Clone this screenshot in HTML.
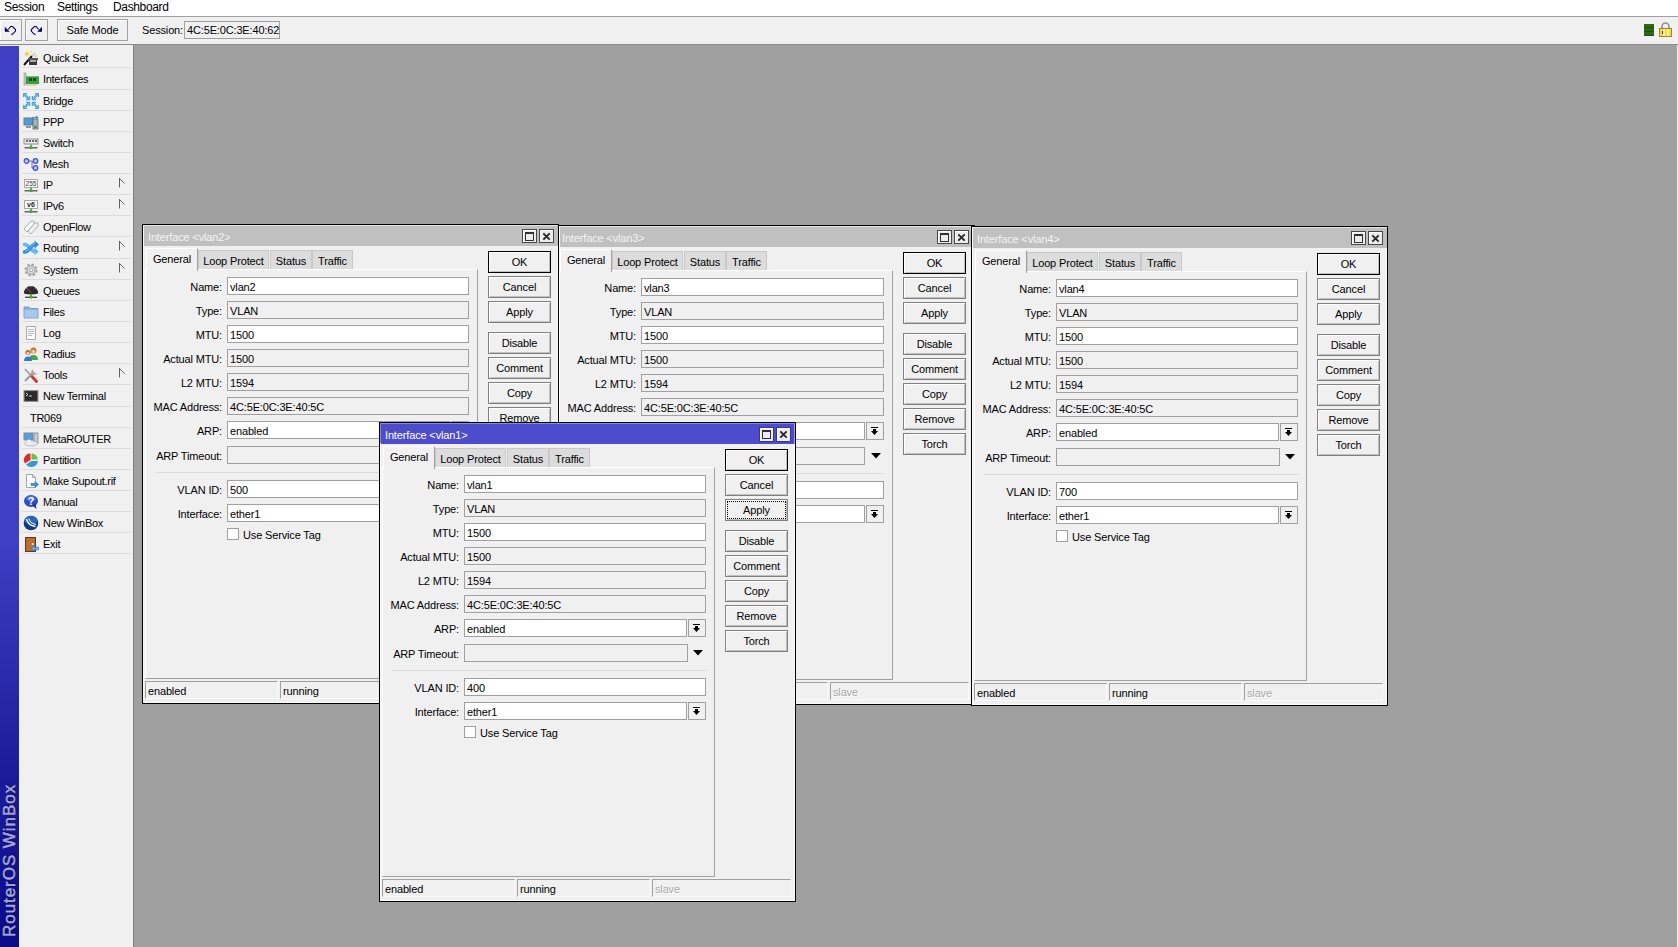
<!DOCTYPE html>
<html lang="en"><head><meta charset="utf-8"><title>WinBox</title>
<style>
html,body{margin:0;padding:0}
body{width:1678px;height:947px;position:relative;overflow:hidden;background:#a0a0a0;font-family:"Liberation Sans",sans-serif;font-size:11px;color:#000;letter-spacing:-0.15px;line-height:13px}
div,span{box-sizing:border-box}
.abs,.abs>*{position:absolute}
#menubar{position:absolute;left:0;top:0;width:1678px;height:16px;background:#fff;font-size:12px;letter-spacing:-0.35px}
#menubar span{position:absolute;top:0;line-height:14px;white-space:nowrap}
#mline{position:absolute;left:0;top:16px;width:1678px;height:1px;background:#a0a0a0}
#toolbar{position:absolute;left:0;top:17px;width:1678px;height:27px;background:#f0f0f0}
#tline{position:absolute;left:0;top:44px;width:1678px;height:1px;background:#8c8c8c}
.tbtn{position:absolute;top:19px;height:22px;border:1px solid #a0a0a0;background:#f0f0f0;box-shadow:inset 1px 1px 0 #fff}
#strip{position:absolute;left:0;top:45px;width:19px;height:902px;border-top:1px solid #f0f0fa;background:linear-gradient(#3f3fc3 0,#3f3fc3 55%,#1c1c9c 80%,#0a0a8a 100%)}
#vtext{position:absolute;left:0;top:0;transform-origin:0 0;transform:translate(1px,937px) rotate(-90deg);font-size:17px;line-height:18px;color:#a8a8d2;-webkit-text-stroke:0.45px #a8a8d2;white-space:nowrap;letter-spacing:0.95px;text-shadow:1px 1px 1px #0c0c50}
#side{position:absolute;left:19px;top:45px;width:114px;height:902px;background:#f0f0f0}
#sideb{position:absolute;left:133px;top:45px;width:1px;height:902px;background:#808080}
.mi{position:absolute;left:0;width:114px;height:21px}
.mi svg{position:absolute;left:4px;top:3px;width:16px;height:16px}
.mi .t{position:absolute;left:24px;top:5px;white-space:nowrap;letter-spacing:-0.3px}
.mi .sep{position:absolute;left:3px;width:109px;height:1px;background:#dcdcdc;bottom:0}
.mi .arr{position:absolute;left:100px;top:4px;width:7px;height:10px}
#redge{position:absolute;left:1677px;top:45px;width:1px;height:902px;background:#f0f0f0}

.win{position:absolute;width:417px;height:480px;background:#f0f0f0;border:1px solid #000;box-shadow:inset 0 0 0 1px #fafafa}
.win>*{position:absolute}
.win .tb{left:1px;top:1px;width:414px;height:20px;background:#c0c0c0;color:#f4f4f4;box-shadow:0 -1px 0 #e4e4e4}
.win.act .tb{background:#4c4ccc;color:#fff;box-shadow:-1px -1px 0 #8888e0,0 -1px 0 #8888e0;width:413px;border-right:0}
.win.act .tbr{left:414px;top:0;width:1px;height:21px;background:#a4a4e4}
.win .tb span{position:absolute;left:4px;top:5px;white-space:nowrap}
.win.act .tb span{top:5px}
.wb{width:15px;height:14px;background:#ececec;border:1px solid #484848;box-shadow:inset 1px 1px 0 #fff;top:4px}
.win.act .wb{height:15px;border-color:#3434a0}
.wb svg{position:absolute;left:0;top:0;width:13px;height:13px}
.tab{top:25px;height:20px;background:#dcdcdc;border:1px solid #c8c8c8;border-bottom:none;line-height:21px;text-align:center;white-space:nowrap}
.tab.on{top:23px;height:23px;background:#f0f0f0;border-color:#fff #a0a0a0 #f0f0f0 #fff;z-index:2;line-height:21px}
.pan{left:2px;top:44px;width:333px;height:410px;border:1px solid;border-color:#fff #a0a0a0 #a0a0a0 #fff}
.lb{width:79px;left:0;text-align:right;white-space:nowrap}
.in{left:84px;width:242px;height:18px;border:1px solid #a0a0a0;background:#fff;line-height:18px;padding-left:2px;white-space:nowrap}
.in.ro{background:#f0f0f0}
.in.dd{width:223px}
.ddb{left:308px;width:18px;height:18px;border:1px solid #a0a0a0;background:#f0f0f0}
.ddb svg{position:absolute;left:4px;top:4px;width:8px;height:9px}
.tri{left:313px;width:10px;height:6px}
.hr{left:12px;width:315px;height:1px;background:#dcdcdc}
.cb{left:84px;width:12px;height:12px;border:1px solid #a0a0a0;background:#fff}
.bt{left:345px;width:63px;height:22px;border:1px solid #808080;background:#f0f0f0;box-shadow:inset 1px 1px 0 #fff,inset -1px -1px 0 #c0c0c0;text-align:center;line-height:20px;white-space:nowrap}
.bt.def{border-color:#000}
.bt.foc:after{content:"";position:absolute;left:1px;top:1px;right:1px;bottom:1px;border:1px dotted #000}
.st{top:456px;height:18px;border:1px solid;border-color:#a0a0a0 #fafafa #fafafa #a0a0a0;line-height:18px;padding-left:2px;white-space:nowrap}
.st.dis{color:#a8a8a8;text-shadow:1px 1px 0 #fff}
.w3 .tab,.w3 .lb,.w3 .in,.w3 .pan,.w3 .tb span,.w3 .cb,.w3 .hr{margin-left:-2px}
.w3 .in{padding-right:1px;width:243px}
.w3 .pan{width:334px}
.w3 .st{margin-left:-1px}
.w3 .in.dd{width:224px}
.w3 .bt,.w3 .ddb,.w3 .tri,.w3 .wb{margin-left:-1px}
</style></head><body>
<div id="menubar"><span style="left:4px">Session</span><span style="left:57px">Settings</span><span style="left:113px">Dashboard</span></div>
<div id="mline"></div>
<div id="toolbar"></div><div id="tline"></div>
<div class="tbtn" style="left:-1px;width:23px"><svg width="21" height="20" viewBox="0 0 21 20" style="position:absolute;left:0;top:0"><path d="M8.200 9.500 L10.700 6.500 H12.500 L15.500 9.500 V11 L12.500 14.300 H11" fill="none" stroke="#00005c" stroke-width="1.100"/><path d="M4.800 6.800 V11.700 H9.700 Z" fill="#00006c"/></svg></div>
<div class="tbtn" style="left:25px;width:23px"><svg width="21" height="20" viewBox="0 0 21 20" style="position:absolute;left:0;top:0"><path d="M12.500 9.500 L10.300 6.500 H8.500 L5.300 9.500 V11 L8.300 14.300 H9.800" fill="none" stroke="#00005c" stroke-width="1.100"/><path d="M16 6.800 V11.700 H11.200 Z" fill="#00006c"/></svg></div>
<div class="tbtn" style="left:57px;width:71px;text-align:center;line-height:20px">Safe Mode</div>
<span style="position:absolute;left:142px;top:24px;white-space:nowrap">Session:</span>
<div style="position:absolute;left:184px;top:21px;width:96px;height:18px;border:1px solid #a0a0a0;background:#f0f0f0;line-height:17px;padding-left:2px;white-space:nowrap">4C:5E:0C:3E:40:62</div>
<div style="position:absolute;left:1644px;top:24px;width:10px;height:12px;background:repeating-linear-gradient(#2c6a12 0,#2c6a12 3px,#1e5208 3px,#1e5208 4px)"></div>
<svg style="position:absolute;left:1659px;top:22px" width="13" height="15" viewBox="0 0 13 15"><path d="M3 7 V4.5 A3.5 3.5 0 0 1 10 4.5 V7" fill="none" stroke="#909090" stroke-width="1.6"/><rect x="0.5" y="6.5" width="12" height="8" fill="#f4d84a" stroke="#a08820"/><rect x="4" y="7" width="2" height="7" fill="#fff3a0"/><rect x="8" y="7" width="2" height="7" fill="#fff3a0"/><rect x="3" y="9" width="1" height="3" fill="#504010"/></svg>
<div id="strip"></div><div id="vtext">RouterOS WinBox</div><div id="side">
<div class="mi" style="top:2px;height:21px"><svg viewBox="0 0 16 16"><path d="M1 15 L9 6" stroke="#111" stroke-width="2"/><path d="M9 6 L12 3" stroke="#ccc" stroke-width="2"/><rect x="6" y="9" width="8" height="6" fill="#3a3a3a"/><rect x="5" y="8" width="10" height="2" fill="#555"/><rect x="7" y="10" width="6" height="2" fill="#aaa"/><path d="M4 1 L5 3 L7 4 L5 5 L4 7 L3 5 L1 4 L3 3 Z" fill="#f0d020"/><circle cx="13" cy="6" r="1" fill="#f0d020"/><circle cx="8" cy="1.5" r=".8" fill="#f0d020"/></svg><span class="t">Quick Set</span><span class="sep"></span></div>
<div class="mi" style="top:23px;height:22px"><svg viewBox="0 0 16 16"><rect x="1" y="2" width="2" height="12" fill="#c8c8c8" stroke="#909090" stroke-width=".6"/><rect x="3" y="5" width="13" height="8" fill="#35a042"/><rect x="3" y="5" width="13" height="1" fill="#6cc070"/><rect x="6" y="7" width="3" height="3" fill="#1c4a20"/><rect x="10" y="7" width="3" height="3" fill="#1c4a20"/><path d="M5 13 V15 M7 13 V15 M9 13 V15 M11 13 V15 M13 13 V15" stroke="#d8c050" stroke-width="1"/></svg><span class="t">Interfaces</span><span class="sep"></span></div>
<div class="mi" style="top:45px;height:21px"><svg viewBox="0 0 16 16"><g fill="#5cbcf0" stroke="#1c80cc" stroke-width=".600" stroke-linejoin="round"><path d="M0 0 L3.600 0 L2.400 1.200 L5.300 4.100 L6.500 2.900 L6.500 6.500 L2.900 6.500 L4.100 5.300 L1.200 2.400 L0 3.600 Z" transform="translate(.3 .3)"/><path d="M0 0 L3.600 0 L2.400 1.200 L5.300 4.100 L6.500 2.900 L6.500 6.500 L2.900 6.500 L4.100 5.300 L1.200 2.400 L0 3.600 Z" transform="translate(15.700 .3) scale(-1 1)"/><path d="M0 0 L3.600 0 L2.400 1.200 L5.300 4.100 L6.500 2.900 L6.500 6.500 L2.900 6.500 L4.100 5.300 L1.200 2.400 L0 3.600 Z" transform="translate(.3 15.700) scale(1 -1)"/><path d="M0 0 L3.600 0 L2.400 1.200 L5.300 4.100 L6.500 2.900 L6.500 6.500 L2.900 6.500 L4.100 5.300 L1.200 2.400 L0 3.600 Z" transform="translate(15.700 15.700) scale(-1 -1)"/></g></svg><span class="t">Bridge</span><span class="sep"></span></div>
<div class="mi" style="top:66px;height:21px"><svg viewBox="0 0 16 16"><rect x="1" y="4" width="9" height="7" fill="#4a9be0" stroke="#707880"/><rect x="3" y="12" width="5" height="2" fill="#9098a0"/><rect x="10" y="5" width="5" height="10" fill="#a8b0b8" stroke="#606870" stroke-width=".8"/><rect x="11" y="12" width="3" height="2" fill="#40a040"/><path d="M9 3 H13 V1.5 L15.5 3.5 L13 5.5 V4 H9 Z" fill="#3090e8"/></svg><span class="t">PPP</span><span class="sep"></span></div>
<div class="mi" style="top:87px;height:21px"><svg viewBox="0 0 16 16"><rect x="1" y="4" width="14" height="5" fill="#e8e8e8" stroke="#909090"/><path d="M3 6 H5 M6 6 H8 M9 6 H11 M12 6 H14" stroke="#404040" stroke-width="1.400"/><path d="M8 9.500 V12" stroke="#30a030" stroke-width="1.400"/><path d="M1.500 12.800 H14.500" stroke="#505050" stroke-width="1.300"/><circle cx="8" cy="12.600" r="1.700" fill="#38b038"/></svg><span class="t">Switch</span><span class="sep"></span></div>
<div class="mi" style="top:108px;height:21px"><svg viewBox="0 0 16 16"><path d="M5 5 H9 V12 H11 M9 6 H11" stroke="#707890" fill="none"/><circle cx="3.5" cy="5" r="2.3" fill="#b8c0ff" stroke="#4050d0" stroke-width="1.2"/><circle cx="12.5" cy="5" r="2.3" fill="#b8c0ff" stroke="#4050d0" stroke-width="1.2"/><circle cx="12.5" cy="12" r="2.3" fill="#b8c0ff" stroke="#4050d0" stroke-width="1.2"/></svg><span class="t">Mesh</span><span class="sep"></span></div>
<div class="mi" style="top:129px;height:21px"><svg viewBox="0 0 16 16"><rect x="1.500" y="2.500" width="13" height="8" fill="#f8f8f8" stroke="#a8a8a8"/><text x="8" y="9" font-size="6.500" text-anchor="middle" font-family="Liberation Sans,sans-serif" fill="#404040" letter-spacing="0">255</text><path d="M8 10.500 V13" stroke="#30a030" stroke-width="1.400"/><path d="M1.500 13.800 H14.500" stroke="#505050" stroke-width="1.300"/><circle cx="8" cy="13.600" r="1.700" fill="#38b038"/></svg><span class="t">IP</span><svg class="arr" viewBox="0 0 7 10" style="left:100px;top:4px;width:7px;height:10px"><path d="M0.500 0 V9.500 M0.500 0.500 L5.500 5.500" stroke="#606060" stroke-width="1" fill="none"/></svg><span class="sep"></span></div>
<div class="mi" style="top:150px;height:21px"><svg viewBox="0 0 16 16"><rect x="1.500" y="2.500" width="13" height="8" fill="#f8f8f8" stroke="#a8a8a8"/><text x="8" y="9" font-size="7" font-weight="bold" text-anchor="middle" font-family="Liberation Sans,sans-serif" fill="#282828" letter-spacing="0">v6</text><path d="M8 10.500 V13" stroke="#30a030" stroke-width="1.400"/><path d="M1.500 13.800 H14.500" stroke="#505050" stroke-width="1.300"/><circle cx="8" cy="13.600" r="1.700" fill="#38b038"/></svg><span class="t">IPv6</span><svg class="arr" viewBox="0 0 7 10" style="left:100px;top:4px;width:7px;height:10px"><path d="M0.500 0 V9.500 M0.500 0.500 L5.500 5.500" stroke="#606060" stroke-width="1" fill="none"/></svg><span class="sep"></span></div>
<div class="mi" style="top:171px;height:21px"><svg viewBox="0 0 16 16"><path d="M1 10 L8 2 L11 2 L11 5 L4 13 Z" fill="#f8faf8" stroke="#a0a8a8" stroke-width=".9"/><path d="M5 12 L12 4 L15 4 L15 7 L8 15 Z" fill="#eef4f2" stroke="#a0a8a8" stroke-width=".9"/></svg><span class="t">OpenFlow</span><span class="sep"></span></div>
<div class="mi" style="top:192px;height:22px"><svg viewBox="0 0 16 16"><path d="M1.500 4.500 C6.500 4.500 7.500 11.500 12 11.500" fill="none" stroke="#62b8f4" stroke-width="3.400" stroke-linecap="round"/><path d="M11.500 7.800 L15.800 11.500 L11.500 15.200 Z" fill="#62b8f4"/><path d="M1.500 12 C6.500 12 7.500 4.500 12 4.500" fill="none" stroke="#2c8ce0" stroke-width="3.600" stroke-linecap="round"/><path d="M11.500 .5 L16 4.500 L11.500 8.500 Z" fill="#2c8ce0"/><path d="M2 11.300 C6.500 11 7.500 4 12 3.800" fill="none" stroke="#7cc8f8" stroke-width="1"/></svg><span class="t">Routing</span><svg class="arr" viewBox="0 0 7 10" style="left:100px;top:4px;width:7px;height:10px"><path d="M0.500 0 V9.500 M0.500 0.500 L5.500 5.500" stroke="#606060" stroke-width="1" fill="none"/></svg><span class="sep"></span></div>
<div class="mi" style="top:214px;height:21px"><svg viewBox="0 0 16 16"><circle cx="8" cy="8" r="5" fill="none" stroke="#a0a0a0" stroke-width="3" stroke-dasharray="2.2 1.7"/><circle cx="8" cy="8" r="4" fill="none" stroke="#b8b8b8" stroke-width="2.2"/><circle cx="8" cy="8" r="1.8" fill="#f0f0f0" stroke="#909090" stroke-width=".8"/></svg><span class="t">System</span><svg class="arr" viewBox="0 0 7 10" style="left:100px;top:4px;width:7px;height:10px"><path d="M0.500 0 V9.500 M0.500 0.500 L5.500 5.500" stroke="#606060" stroke-width="1" fill="none"/></svg><span class="sep"></span></div>
<div class="mi" style="top:235px;height:21px"><svg viewBox="0 0 16 16"><path d="M.8 10.500 A7.200 7.500 0 0 1 15.200 10.500 Q8 12.500 .8 10.500 Z" fill="#2c2c2c"/><path d="M8 9.500 L4.500 5.500" stroke="#e04040" stroke-width="1"/><path d="M3 5 l1 1 M8 3 v1.300 M13 5 l-1 1" stroke="#aaa" stroke-width=".7"/><path d="M8 11.500 V13.500" stroke="#30a030" stroke-width="1.400"/><path d="M2 14.300 H14" stroke="#404040" stroke-width="1.300"/><circle cx="8" cy="14" r="1.700" fill="#38b038"/></svg><span class="t">Queues</span><span class="sep"></span></div>
<div class="mi" style="top:256px;height:21px"><svg viewBox="0 0 16 16"><path d="M1 3 H6 L7.5 4.5 H15 V14 H1 Z" fill="#8cb4e0" stroke="#6890c0" stroke-width=".8"/><rect x="1.5" y="6" width="13" height="7.6" fill="#a8c8ec"/></svg><span class="t">Files</span><span class="sep"></span></div>
<div class="mi" style="top:277px;height:21px"><svg viewBox="0 0 16 16"><path d="M3.5 1.5 H12.500 V14.5 H3.5 Z" fill="#fbfbfb" stroke="#a8a8a8"/><path d="M5 4.5 H11 M5 6.5 H11 M5 8.500 H11 M5 10.5 H9" stroke="#b0b8c0" stroke-width="1"/></svg><span class="t">Log</span><span class="sep"></span></div>
<div class="mi" style="top:298px;height:21px"><svg viewBox="0 0 16 16"><circle cx="10.5" cy="4.5" r="3" fill="#c87830"/><circle cx="10.5" cy="5.5" r="1.8" fill="#f4c8a0"/><path d="M6 14 Q6 9 10.500 9 Q15 9 15 14 Z" fill="#40a850"/><circle cx="5" cy="6.5" r="2.6" fill="#b86828"/><circle cx="5" cy="7.300" r="1.600" fill="#f4c8a0"/><path d="M1 15 Q1 10.500 5 10.500 Q9 10.500 9 15 Z" fill="#3c78d0"/></svg><span class="t">Radius</span><span class="sep"></span></div>
<div class="mi" style="top:319px;height:21px"><svg viewBox="0 0 16 16"><path d="M2 2 L13 14" stroke="#a0a0a0" stroke-width="1.8"/><path d="M8.5 9 L13.5 14.5" stroke="#e03030" stroke-width="2.8" stroke-linecap="round"/><path d="M2 14 L11 5" stroke="#989898" stroke-width="2"/><path d="M10 2.500 A3 3 0 1 0 14 6 L12 6.500 L10.500 5 Z" fill="#a8a8a8"/></svg><span class="t">Tools</span><svg class="arr" viewBox="0 0 7 10" style="left:100px;top:4px;width:7px;height:10px"><path d="M0.500 0 V9.500 M0.500 0.500 L5.500 5.500" stroke="#606060" stroke-width="1" fill="none"/></svg><span class="sep"></span></div>
<div class="mi" style="top:340px;height:22px"><svg viewBox="0 0 16 16"><rect x="1" y="2.5" width="14" height="11" fill="#404040" stroke="#909090"/><rect x="2" y="3.500" width="12" height="9" fill="#2a2a2a"/><path d="M3 5 L5 6.500 L3 8 M6 8 H9" stroke="#e0e0e0" stroke-width=".9" fill="none"/></svg><span class="t">New Terminal</span><span class="sep"></span></div>
<div class="mi" style="top:362px;height:21px"><span class="t" style="left:11px">TR069</span><span class="sep"></span></div>
<div class="mi" style="top:383px;height:21px"><svg viewBox="0 0 16 16"><rect x="1" y="2" width="9" height="7" fill="#50a0e4" stroke="#808890"/><rect x="11" y="2" width="4" height="10" fill="#c8ccd0" stroke="#808890" stroke-width=".8"/><ellipse cx="8" cy="12.500" rx="6.500" ry="2.600" fill="#e4eaf2" stroke="#a0a8b4" stroke-width=".7"/><circle cx="6" cy="11" r="2.400" fill="#e8eef6"/></svg><span class="t">MetaROUTER</span><span class="sep"></span></div>
<div class="mi" style="top:404px;height:21px"><svg viewBox="0 0 16 16"><path d="M7.500 8 V1.500 A6.500 6.500 0 0 0 2 11.500 Z" fill="#e02828"/><path d="M8.500 7.500 V1.500 A6.500 6.500 0 0 1 14.800 7.500 Z" fill="#68c040"/><path d="M8.300 9 H15 A6.800 6.800 0 0 1 3 12.500 Z" fill="#3498d8"/></svg><span class="t">Partition</span><span class="sep"></span></div>
<div class="mi" style="top:425px;height:21px"><svg viewBox="0 0 16 16"><path d="M3.500 1.500 H9.500 L12.500 4.500 V14.500 H3.500 Z" fill="#fcfcfc" stroke="#a0a8b0"/><path d="M9.500 1.500 V4.500 H12.500" fill="none" stroke="#a0a8b0"/><path d="M8 10.500 H12 V8.500 L15.500 11.500 L12 14.500 V12.500 H8 Z" fill="#3890e0" stroke="#2060b0" stroke-width=".5"/></svg><span class="t">Make Supout.rif</span><span class="sep"></span></div>
<div class="mi" style="top:446px;height:21px"><svg viewBox="0 0 16 16"><ellipse cx="8" cy="7" rx="7" ry="6.100" fill="#2c4cc4"/><path d="M9.500 11.500 L13.500 15 L12.500 10 Z" fill="#1c2c90"/><ellipse cx="8" cy="4.500" rx="5" ry="2.800" fill="#6c8cf0" opacity=".55"/><text x="8" y="10.800" font-size="10.500" font-weight="bold" text-anchor="middle" font-family="Liberation Sans,sans-serif" fill="#fff" letter-spacing="0">?</text></svg><span class="t">Manual</span><span class="sep"></span></div>
<div class="mi" style="top:467px;height:21px"><svg viewBox="0 0 16 16"><circle cx="8" cy="8" r="7.300" fill="#0e3c84"/><path d="M1.200 6 A7.300 7.300 0 0 1 14.800 6 A9 6 0 0 0 1.200 6 Z" fill="#2c74c8"/><ellipse cx="8" cy="5.500" rx="6.500" ry="4" fill="#2468bc"/><path d="M3.500 4 Q5 10.500 12.500 11.500" fill="none" stroke="#fff" stroke-width="1.300"/><path d="M6 3.500 Q7 8.500 13 9.500" fill="none" stroke="#d8e8ff" stroke-width="1.100"/></svg><span class="t">New WinBox</span><span class="sep"></span></div>
<div class="mi" style="top:488px;height:21px"><svg viewBox="0 0 16 16"><rect x="2.500" y="1.500" width="10" height="14" fill="#b86a30" stroke="#6c3410"/><path d="M5 3 V14 M7.500 3 V14 M10 3 V14" stroke="#8c4818" stroke-width=".8"/><rect x="4" y="3" width="7" height="11" fill="#c87838" opacity=".6"/><circle cx="9.800" cy="8" r="1" fill="#fff"/><path d="M15.500 11.200 H11.500 V9.700 L8 12.500 L11.500 15.300 V13.800 H15.500 Z" fill="#58b0f0" stroke="#1c78c8" stroke-width=".6"/></svg><span class="t">Exit</span><span class="sep"></span></div>
</div><div id="sideb"></div><div id="redge"></div>
<div class="win" style="left:142px;top:224px"><div class="tb"><span>Interface &lt;vlan2&gt;</span></div><div class="wb" style="left:379px"><svg viewBox="0 0 13 13"><rect x="2.500" y="2.500" width="8" height="8" fill="none" stroke="#303030"/><rect x="2" y="2" width="9" height="2" fill="#303030"/></svg></div><div class="wb" style="left:396px"><svg viewBox="0 0 13 13"><path d="M3.300 3.300 L9.700 9.700 M9.700 3.300 L3.300 9.700" stroke="#282828" stroke-width="1.900"/></svg></div><div class="tab on" style="left:3px;width:52px">General</div><div class="tab" style="left:55px;width:71px">Loop Protect</div><div class="tab" style="left:127px;width:42px">Status</div><div class="tab" style="left:169px;width:41px">Traffic</div><div class="pan"></div><span class="lb" style="top:56px">Name:</span><div class="in " style="top:52px">vlan2</div><span class="lb" style="top:80px">Type:</span><div class="in ro" style="top:76px">VLAN</div><span class="lb" style="top:104px">MTU:</span><div class="in " style="top:100px">1500</div><span class="lb" style="top:128px">Actual MTU:</span><div class="in ro" style="top:124px">1500</div><span class="lb" style="top:152px">L2 MTU:</span><div class="in ro" style="top:148px">1594</div><span class="lb" style="top:176px">MAC Address:</span><div class="in ro" style="top:172px">4C:5E:0C:3E:40:5C</div><span class="lb" style="top:200px">ARP:</span><div class="in dd" style="top:196px">enabled</div><div class="ddb" style="top:196px"><svg viewBox="0 0 8 9"><rect x="0" y="0" width="7" height="1" fill="#000"/><path d="M2 2 H5 V4 H7 L3.500 8 L0 4 H2 Z" fill="#000"/></svg></div><span class="lb" style="top:225px">ARP Timeout:</span><div class="in ro" style="top:221px;width:224px"></div><svg class="tri" style="top:227px" viewBox="0 0 10 6"><path d="M0 0 H10 L5 5.500 Z" fill="#000"/></svg><div class="hr" style="top:247px"></div><span class="lb" style="top:259px">VLAN ID:</span><div class="in" style="top:255px">500</div><span class="lb" style="top:283px">Interface:</span><div class="in dd" style="top:279px">ether1</div><div class="ddb" style="top:279px"><svg viewBox="0 0 8 9"><rect x="0" y="0" width="7" height="1" fill="#000"/><path d="M2 2 H5 V4 H7 L3.500 8 L0 4 H2 Z" fill="#000"/></svg></div><div class="cb" style="top:303px"></div><span style="left:100px;top:304px;white-space:nowrap">Use Service Tag</span><div class="bt def" style="top:26px">OK</div><div class="bt " style="top:51px">Cancel</div><div class="bt " style="top:76px">Apply</div><div class="bt " style="top:107px">Disable</div><div class="bt " style="top:132px">Comment</div><div class="bt " style="top:157px">Copy</div><div class="bt " style="top:182px">Remove</div><div class="bt " style="top:207px">Torch</div><div class="st" style="left:2px;width:133px">enabled</div><div class="st" style="left:137px;width:133px">running</div><div class="st dis" style="left:272px;width:139px">slave</div></div>
<div class="win w3" style="left:558px;top:225px"><div class="tb"><span>Interface &lt;vlan3&gt;</span></div><div class="wb" style="left:379px"><svg viewBox="0 0 13 13"><rect x="2.500" y="2.500" width="8" height="8" fill="none" stroke="#303030"/><rect x="2" y="2" width="9" height="2" fill="#303030"/></svg></div><div class="wb" style="left:396px"><svg viewBox="0 0 13 13"><path d="M3.300 3.300 L9.700 9.700 M9.700 3.300 L3.300 9.700" stroke="#282828" stroke-width="1.900"/></svg></div><div class="tab on" style="left:3px;width:52px">General</div><div class="tab" style="left:55px;width:71px">Loop Protect</div><div class="tab" style="left:127px;width:42px">Status</div><div class="tab" style="left:169px;width:41px">Traffic</div><div class="pan"></div><span class="lb" style="top:56px">Name:</span><div class="in " style="top:52px">vlan3</div><span class="lb" style="top:80px">Type:</span><div class="in ro" style="top:76px">VLAN</div><span class="lb" style="top:104px">MTU:</span><div class="in " style="top:100px">1500</div><span class="lb" style="top:128px">Actual MTU:</span><div class="in ro" style="top:124px">1500</div><span class="lb" style="top:152px">L2 MTU:</span><div class="in ro" style="top:148px">1594</div><span class="lb" style="top:176px">MAC Address:</span><div class="in ro" style="top:172px">4C:5E:0C:3E:40:5C</div><span class="lb" style="top:200px">ARP:</span><div class="in dd" style="top:196px">enabled</div><div class="ddb" style="top:196px"><svg viewBox="0 0 8 9"><rect x="0" y="0" width="7" height="1" fill="#000"/><path d="M2 2 H5 V4 H7 L3.500 8 L0 4 H2 Z" fill="#000"/></svg></div><span class="lb" style="top:225px">ARP Timeout:</span><div class="in ro" style="top:221px;width:224px"></div><svg class="tri" style="top:227px" viewBox="0 0 10 6"><path d="M0 0 H10 L5 5.500 Z" fill="#000"/></svg><div class="hr" style="top:247px"></div><span class="lb" style="top:259px">VLAN ID:</span><div class="in" style="top:255px">600</div><span class="lb" style="top:283px">Interface:</span><div class="in dd" style="top:279px">ether1</div><div class="ddb" style="top:279px"><svg viewBox="0 0 8 9"><rect x="0" y="0" width="7" height="1" fill="#000"/><path d="M2 2 H5 V4 H7 L3.500 8 L0 4 H2 Z" fill="#000"/></svg></div><div class="cb" style="top:303px"></div><span style="left:100px;top:304px;white-space:nowrap">Use Service Tag</span><div class="bt def" style="top:26px">OK</div><div class="bt " style="top:51px">Cancel</div><div class="bt " style="top:76px">Apply</div><div class="bt " style="top:107px">Disable</div><div class="bt " style="top:132px">Comment</div><div class="bt " style="top:157px">Copy</div><div class="bt " style="top:182px">Remove</div><div class="bt " style="top:207px">Torch</div><div class="st" style="left:2px;width:133px">enabled</div><div class="st" style="left:137px;width:133px">running</div><div class="st dis" style="left:272px;width:139px">slave</div></div>
<div class="win" style="left:971px;top:226px"><div class="tb"><span>Interface &lt;vlan4&gt;</span></div><div class="wb" style="left:379px"><svg viewBox="0 0 13 13"><rect x="2.500" y="2.500" width="8" height="8" fill="none" stroke="#303030"/><rect x="2" y="2" width="9" height="2" fill="#303030"/></svg></div><div class="wb" style="left:396px"><svg viewBox="0 0 13 13"><path d="M3.300 3.300 L9.700 9.700 M9.700 3.300 L3.300 9.700" stroke="#282828" stroke-width="1.900"/></svg></div><div class="tab on" style="left:3px;width:52px">General</div><div class="tab" style="left:55px;width:71px">Loop Protect</div><div class="tab" style="left:127px;width:42px">Status</div><div class="tab" style="left:169px;width:41px">Traffic</div><div class="pan"></div><span class="lb" style="top:56px">Name:</span><div class="in " style="top:52px">vlan4</div><span class="lb" style="top:80px">Type:</span><div class="in ro" style="top:76px">VLAN</div><span class="lb" style="top:104px">MTU:</span><div class="in " style="top:100px">1500</div><span class="lb" style="top:128px">Actual MTU:</span><div class="in ro" style="top:124px">1500</div><span class="lb" style="top:152px">L2 MTU:</span><div class="in ro" style="top:148px">1594</div><span class="lb" style="top:176px">MAC Address:</span><div class="in ro" style="top:172px">4C:5E:0C:3E:40:5C</div><span class="lb" style="top:200px">ARP:</span><div class="in dd" style="top:196px">enabled</div><div class="ddb" style="top:196px"><svg viewBox="0 0 8 9"><rect x="0" y="0" width="7" height="1" fill="#000"/><path d="M2 2 H5 V4 H7 L3.500 8 L0 4 H2 Z" fill="#000"/></svg></div><span class="lb" style="top:225px">ARP Timeout:</span><div class="in ro" style="top:221px;width:224px"></div><svg class="tri" style="top:227px" viewBox="0 0 10 6"><path d="M0 0 H10 L5 5.500 Z" fill="#000"/></svg><div class="hr" style="top:247px"></div><span class="lb" style="top:259px">VLAN ID:</span><div class="in" style="top:255px">700</div><span class="lb" style="top:283px">Interface:</span><div class="in dd" style="top:279px">ether1</div><div class="ddb" style="top:279px"><svg viewBox="0 0 8 9"><rect x="0" y="0" width="7" height="1" fill="#000"/><path d="M2 2 H5 V4 H7 L3.500 8 L0 4 H2 Z" fill="#000"/></svg></div><div class="cb" style="top:303px"></div><span style="left:100px;top:304px;white-space:nowrap">Use Service Tag</span><div class="bt def" style="top:26px">OK</div><div class="bt " style="top:51px">Cancel</div><div class="bt " style="top:76px">Apply</div><div class="bt " style="top:107px">Disable</div><div class="bt " style="top:132px">Comment</div><div class="bt " style="top:157px">Copy</div><div class="bt " style="top:182px">Remove</div><div class="bt " style="top:207px">Torch</div><div class="st" style="left:2px;width:133px">enabled</div><div class="st" style="left:137px;width:133px">running</div><div class="st dis" style="left:272px;width:139px">slave</div></div>
<div class="win act" style="left:379px;top:422px"><div class="tb"><span>Interface &lt;vlan1&gt;</span></div><div class="tbr"></div><div class="wb" style="left:379px"><svg viewBox="0 0 13 13"><rect x="2.500" y="2.500" width="8" height="8" fill="none" stroke="#303030"/><rect x="2" y="2" width="9" height="2" fill="#303030"/></svg></div><div class="wb" style="left:396px"><svg viewBox="0 0 13 13"><path d="M3.300 3.300 L9.700 9.700 M9.700 3.300 L3.300 9.700" stroke="#282828" stroke-width="1.900"/></svg></div><div class="tab on" style="left:3px;width:52px">General</div><div class="tab" style="left:55px;width:71px">Loop Protect</div><div class="tab" style="left:127px;width:42px">Status</div><div class="tab" style="left:169px;width:41px">Traffic</div><div class="pan"></div><span class="lb" style="top:56px">Name:</span><div class="in " style="top:52px">vlan1</div><span class="lb" style="top:80px">Type:</span><div class="in ro" style="top:76px">VLAN</div><span class="lb" style="top:104px">MTU:</span><div class="in " style="top:100px">1500</div><span class="lb" style="top:128px">Actual MTU:</span><div class="in ro" style="top:124px">1500</div><span class="lb" style="top:152px">L2 MTU:</span><div class="in ro" style="top:148px">1594</div><span class="lb" style="top:176px">MAC Address:</span><div class="in ro" style="top:172px">4C:5E:0C:3E:40:5C</div><span class="lb" style="top:200px">ARP:</span><div class="in dd" style="top:196px">enabled</div><div class="ddb" style="top:196px"><svg viewBox="0 0 8 9"><rect x="0" y="0" width="7" height="1" fill="#000"/><path d="M2 2 H5 V4 H7 L3.500 8 L0 4 H2 Z" fill="#000"/></svg></div><span class="lb" style="top:225px">ARP Timeout:</span><div class="in ro" style="top:221px;width:224px"></div><svg class="tri" style="top:227px" viewBox="0 0 10 6"><path d="M0 0 H10 L5 5.500 Z" fill="#000"/></svg><div class="hr" style="top:247px"></div><span class="lb" style="top:259px">VLAN ID:</span><div class="in" style="top:255px">400</div><span class="lb" style="top:283px">Interface:</span><div class="in dd" style="top:279px">ether1</div><div class="ddb" style="top:279px"><svg viewBox="0 0 8 9"><rect x="0" y="0" width="7" height="1" fill="#000"/><path d="M2 2 H5 V4 H7 L3.500 8 L0 4 H2 Z" fill="#000"/></svg></div><div class="cb" style="top:303px"></div><span style="left:100px;top:304px;white-space:nowrap">Use Service Tag</span><div class="bt def" style="top:26px">OK</div><div class="bt " style="top:51px">Cancel</div><div class="bt foc" style="top:76px">Apply</div><div class="bt " style="top:107px">Disable</div><div class="bt " style="top:132px">Comment</div><div class="bt " style="top:157px">Copy</div><div class="bt " style="top:182px">Remove</div><div class="bt " style="top:207px">Torch</div><div class="st" style="left:2px;width:133px">enabled</div><div class="st" style="left:137px;width:133px">running</div><div class="st dis" style="left:272px;width:139px">slave</div></div>
</body></html>
